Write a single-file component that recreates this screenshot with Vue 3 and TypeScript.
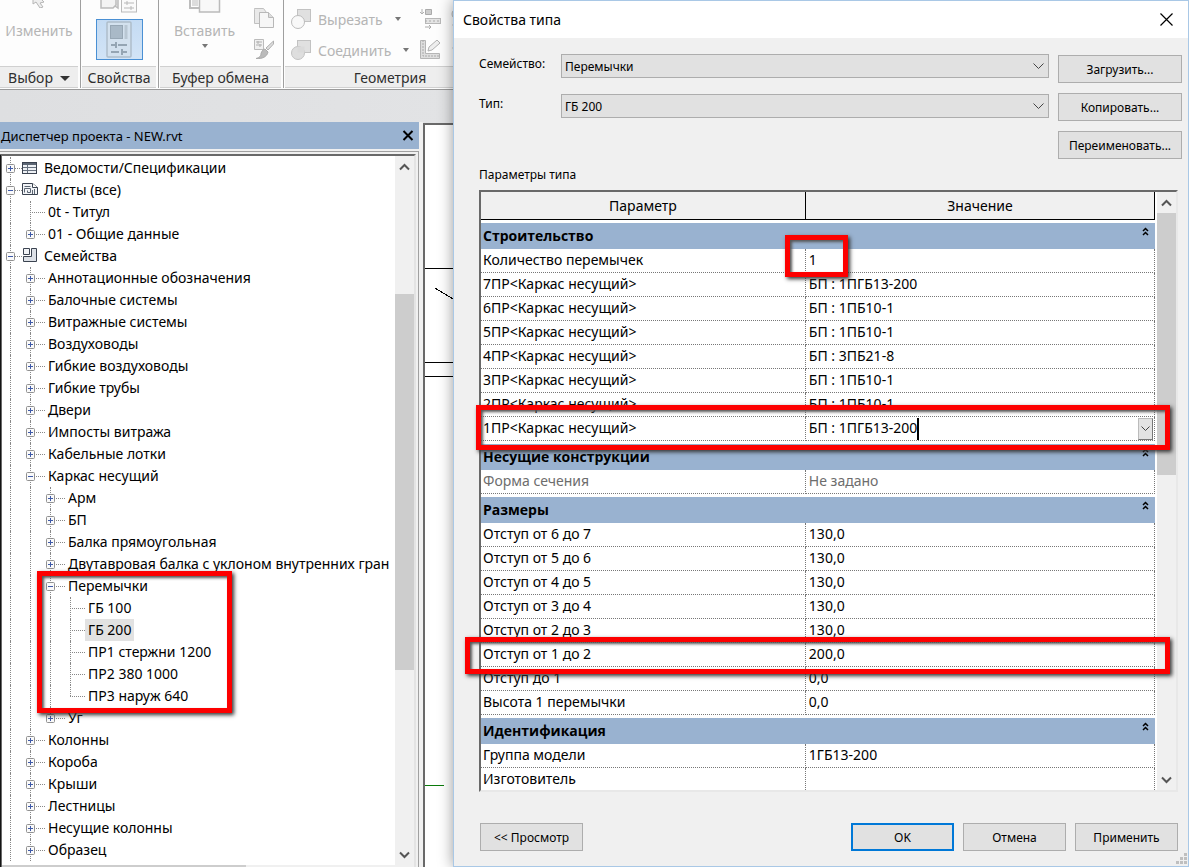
<script setup lang="ts">
import { computed, ref } from 'vue'

type Icon = 'schedule' | 'sheet' | 'family'

interface TreeItem {
  level: number
  label: string
  toggle?: '+' | '-'
  icon?: Icon
  selected?: boolean
  marked?: boolean
}

interface Param {
  name: string
  value: string
  readonly?: boolean
  active?: boolean
}

interface ParamGroup {
  title: string
  rows: Param[]
}

const items: TreeItem[] = [
  { level: 0, label: 'Ведомости/Спецификации', toggle: '+', icon: 'schedule' },
  { level: 0, label: 'Листы (все)', toggle: '-', icon: 'sheet' },
  { level: 1, label: '0t - Титул' },
  { level: 1, label: '01 - Общие данные', toggle: '+' },
  { level: 0, label: 'Семейства', toggle: '-', icon: 'family' },
  { level: 1, label: 'Аннотационные обозначения', toggle: '+' },
  { level: 1, label: 'Балочные системы', toggle: '+' },
  { level: 1, label: 'Витражные системы', toggle: '+' },
  { level: 1, label: 'Воздуховоды', toggle: '+' },
  { level: 1, label: 'Гибкие воздуховоды', toggle: '+' },
  { level: 1, label: 'Гибкие трубы', toggle: '+' },
  { level: 1, label: 'Двери', toggle: '+' },
  { level: 1, label: 'Импосты витража', toggle: '+' },
  { level: 1, label: 'Кабельные лотки', toggle: '+' },
  { level: 1, label: 'Каркас несущий', toggle: '-' },
  { level: 2, label: 'Арм', toggle: '+' },
  { level: 2, label: 'БП', toggle: '+' },
  { level: 2, label: 'Балка прямоугольная', toggle: '+' },
  { level: 2, label: 'Двутавровая балка с уклоном внутренних гран', toggle: '+' },
  { level: 2, label: 'Перемычки', toggle: '-', marked: true },
  { level: 3, label: 'ГБ 100' },
  { level: 3, label: 'ГБ 200', selected: true },
  { level: 3, label: 'ПР1 стержни 1200' },
  { level: 3, label: 'ПР2 380 1000' },
  { level: 3, label: 'ПР3 наруж 640' },
  { level: 2, label: 'Уг', toggle: '+' },
  { level: 1, label: 'Колонны', toggle: '+' },
  { level: 1, label: 'Короба', toggle: '+' },
  { level: 1, label: 'Крыши', toggle: '+' },
  { level: 1, label: 'Лестницы', toggle: '+' },
  { level: 1, label: 'Несущие колонны', toggle: '+' },
  { level: 1, label: 'Образец', toggle: '+' },
]

// The list goes on below the visible part, so the two outer branches never end here.
function branch(index: number, column: number): 'full' | 'half' | 'none' {
  for (let i = index + 1; i < items.length; i++) {
    if (items[i].level === column) return 'full'
    if (items[i].level < column) return items[index].level === column ? 'half' : 'none'
  }
  return column < 2 ? 'full' : 'none'
}

const tree = computed(() =>
  items.map((item, i) => ({
    ...item,
    guides: Array.from({ length: item.level + 1 }, (_, c) => branch(i, c)),
  })),
)

const groups: ParamGroup[] = [
  {
    title: 'Строительство',
    rows: [
      { name: 'Количество перемычек', value: '1' },
      { name: '7ПР<Каркас несущий>', value: 'БП : 1ПГБ13-200' },
      { name: '6ПР<Каркас несущий>', value: 'БП : 1ПБ10-1' },
      { name: '5ПР<Каркас несущий>', value: 'БП : 1ПБ10-1' },
      { name: '4ПР<Каркас несущий>', value: 'БП : 3ПБ21-8' },
      { name: '3ПР<Каркас несущий>', value: 'БП : 1ПБ10-1' },
      { name: '2ПР<Каркас несущий>', value: 'БП : 1ПБ10-1' },
      { name: '1ПР<Каркас несущий>', value: 'БП : 1ПГБ13-200', active: true },
    ],
  },
  {
    title: 'Несущие конструкции',
    rows: [{ name: 'Форма сечения', value: 'Не задано', readonly: true }],
  },
  {
    title: 'Размеры',
    rows: [
      { name: 'Отступ от 6 до 7', value: '130,0' },
      { name: 'Отступ от 5 до 6', value: '130,0' },
      { name: 'Отступ от 4 до 5', value: '130,0' },
      { name: 'Отступ от 3 до 4', value: '130,0' },
      { name: 'Отступ от 2 до 3', value: '130,0' },
      { name: 'Отступ от 1 до 2', value: '200,0' },
      { name: 'Отступ до 1', value: '0,0' },
      { name: 'Высота 1 перемычки', value: '0,0' },
    ],
  },
  {
    title: 'Идентификация',
    rows: [
      { name: 'Группа модели', value: '1ГБ13-200' },
      { name: 'Изготовитель', value: '' },
    ],
  },
]

const activeValue = ref('БП : 1ПГБ13-200')
const family = ref('Перемычки')
const typeName = ref('ГБ 200')
</script>

<template>
  <div class="screen">
    <main class="app">
      <div class="ribbon">
        <section class="panel p-select">
          <div class="panel-body">
            <svg class="cursor" width="16" height="8" viewBox="0 0 16 8"><path d="M2 0v4l3-2 4 6 3-1-3-4 4-1-2-2" fill="#eee" stroke="#b5b5b5" /></svg>
            <span class="tool">Изменить</span>
          </div>
          <h2>Выбор <i class="tri big"></i></h2>
        </section>
        <section class="panel p-props">
          <div class="panel-body">
            <svg width="38" height="13" viewBox="0 0 38 13">
              <path d="M1 0v8h12l3-3V0M18 0v8l-3-2" fill="#f3f3f3" stroke="#bbb" stroke-width="1.5" />
              <rect x="21.500" y="-3" width="15" height="15" fill="#fafafa" stroke="#bbb" />
              <path d="M24 3h10M24 8h10M27 1v4M31 6v4" stroke="#b8b8b8" />
            </svg>
            <button class="props-button" aria-label="Свойства">
              <svg width="26" height="37" viewBox="0 0 26 37">
                <rect x="1" y="1" width="24" height="35" rx="1" fill="#d3e1ee" stroke="#aebdca" stroke-width="1.500" />
                <rect x="4.500" y="4.500" width="12" height="13" fill="#a9b9c7" stroke="#97a7b5" />
                <rect x="18.500" y="4" width="3" height="14" fill="#b9c7d3" />
                <path d="M5 24h4M12 24h9M5 31h8M17 31h4M10 21v6M16 28v6" stroke="#95a5b3" stroke-width="2" />
              </svg>
            </button>
          </div>
          <h2>Свойства</h2>
        </section>
        <section class="panel p-clip">
          <div class="panel-body clip">
            <div class="paste">
              <svg width="32" height="14" viewBox="0 0 32 14">
                <path d="M1 0v8h10" fill="none" stroke="#bdbdbd" stroke-width="2" />
                <path d="M3 0h6v6H3z" fill="#ddd" />
                <rect x="10.500" y="-3" width="20" height="15" fill="#f8f8f8" stroke="#bbb" stroke-width="1.500" />
              </svg>
              <span class="tool">Вставить</span>
              <i class="tri"></i>
            </div>
            <div class="stack">
              <svg width="20" height="20" viewBox="0 0 20 20">
                <path d="M.5 1.500V15.500h5V4.500h7l-3-4H.5z" fill="#e9e9e9" stroke="#c0c0c0" />
                <path d="M5.500 4.500h9l5 5v10h-14z" fill="#f6f6f6" stroke="#b8b8b8" />
                <path d="M14.500 4.500v5h5" fill="#ddd" stroke="#b8b8b8" />
              </svg>
              <svg width="20" height="20" viewBox="0 0 20 20">
                <path d="M.5.500h9v10h-9z" fill="#f0f0f0" stroke="#bbb" />
                <path d="M2 3h6M2 6h6M4 2v3M6 5v3" stroke="#b0b0b0" />
                <path d="M19.500 2 12 9l2 2 5.500-6z" fill="#ddd" stroke="#b0b0b0" />
                <path d="m11 10 3 3c-1 5-6 7-12 6.500 4-1 5-3 5-5 1-3 2-4 4-4.500z" fill="#bbb" stroke="#aaa" />
              </svg>
            </div>
          </div>
          <h2>Буфер обмена</h2>
        </section>
        <section class="panel p-geom">
          <div class="panel-body geom">
            <div class="tool-row">
              <svg width="20" height="20" viewBox="0 0 20 20">
                <rect x="6.500" y=".5" width="13" height="12" fill="#e0e0e0" stroke="#c2c2c2" />
                <circle cx="7" cy="13" r="6.500" fill="#f8f8f8" stroke="#bcbcbc" />
              </svg>
              <span class="tool">Вырезать</span><i class="tri"></i>
              <svg class="side" width="44" height="20" viewBox="0 0 44 20">
                <path d="M2 0v5M0 3l2 2 2-2" fill="none" stroke="#b0b0b0" />
                <path d="M5.500.500h6v5h-6z" fill="#ccc" stroke="#aaa" />
                <rect x="5.500" y="9.500" width="15" height="5" fill="#e4e4e4" stroke="#b8b8b8" />
                <path d="M5 12h15" stroke="#aaa" stroke-dasharray="2 2" />
                <path d="M5 18h6M9 16l2 2-2 2" fill="none" stroke="#aaa" />
                <circle cx="37" cy="5" r="5" fill="#eee" stroke="#b5b5b5" /><circle cx="37" cy="16" r="4" fill="#eee" stroke="#b5b5b5" />
              </svg>
            </div>
            <div class="tool-row">
              <svg width="20" height="20" viewBox="0 0 20 20">
                <rect x="6.500" y=".5" width="13" height="12" fill="#e0e0e0" stroke="#c2c2c2" />
                <circle cx="7" cy="13" r="6.500" fill="#dedede" stroke="#c2c2c2" />
                <path d="M6.500 12.500V6.500h7v6z" fill="#dadada" />
              </svg>
              <span class="tool">Соединить</span><i class="tri"></i>
              <svg class="side" width="44" height="20" viewBox="0 0 44 20">
                <path d="M.5.500h5v13h14v5H.5z" fill="#dedede" stroke="#b5b5b5" />
                <path d="M3 0v16h16" fill="none" stroke="#aaa" stroke-dasharray="2 1" />
                <path d="m8 11 1-4 8-7 3 3-8 7z" fill="#eee" stroke="#b0b0b0" />
                <circle cx="37" cy="8" r="4" fill="#ddd" stroke="#b5b5b5" />
              </svg>
            </div>
          </div>
          <h2>Геометрия</h2>
        </section>
      </div>

      <div class="workspace">
        <aside class="browser">
          <header class="browser-title">
            <h1>Диспетчер проекта - NEW.rvt</h1>
            <button class="plain" aria-label="Закрыть диспетчер">
              <svg width="12" height="11" viewBox="0 0 12 11"><path d="m1.500 1 9 9m0-9-9 9" stroke="#000" stroke-width="2" /></svg>
            </button>
          </header>
          <div class="browser-frame">
            <div class="tree-box">
              <div class="tree-view">
                <ul class="tree">
                  <li v-for="(item, i) in tree" :key="i" class="node">
                    <span
                      v-for="(g, c) in item.guides"
                      :key="c"
                      class="cell"
                      :class="[g, { own: c === item.level, root: c === 0 && item.level === 0 }]"
                    >
                      <button v-if="c === item.level && item.toggle" class="toggle" :aria-label="item.label">
                        <svg width="9" height="9" viewBox="0 0 9 9">
                          <rect x=".5" y=".5" width="8" height="8" rx="1" fill="#fafafa" stroke="#919191" />
                          <path :d="item.toggle === '+' ? 'M2 4.500h5M4.500 2v5' : 'M2 4.500h5'" stroke="#3f5aa8" />
                        </svg>
                      </button>
                    </span>
                    <svg v-if="item.icon" class="node-icon" width="16" height="16" viewBox="0 0 16 16">
                      <template v-if="item.icon === 'schedule'">
                        <rect x=".5" y="2.500" width="14" height="11" fill="#eef1f5" stroke="#3b4350" />
                        <path d="M1 4h13" stroke="#5b6573" stroke-width="2" />
                        <path d="M1 7.500h13M1 10.500h13M5.500 5v8" stroke="#66707e" />
                      </template>
                      <template v-else-if="item.icon === 'sheet'">
                        <path d="M.5 1.500h10l5 4v7H.5z" fill="#f2f4f7" stroke="#3b4350" />
                        <path d="M10.500 1.500v4h5" fill="#fff" stroke="#3b4350" />
                        <path d="M2.500 10.500v-4h6v4H5.500v-2M12.500 7v5M10.500 8v4M2.500 4.500h6" fill="none" stroke="#5b6573" />
                      </template>
                      <template v-else>
                        <path d="M1.500.500h6v6h-6z" fill="#f2f4f7" stroke="#3b4350" />
                        <path d="M9.500.500h5v13h-13v-5h8z" fill="#dde1e7" stroke="#3b4350" />
                      </template>
                    </svg>
                    <span class="label" :class="{ selected: item.selected }">{{ item.label }}</span>
                    <span v-if="item.marked" class="mark mark-tree"></span>
                  </li>
                </ul>
                <div class="hscroll"><i></i></div>
              </div>
              <div class="vscroll tree-scroll">
                <button class="plain arrow" aria-label="Вверх"><svg width="11" height="8" viewBox="0 0 11 8"><path d="m1 6.500 4.500-4.500L10 6.500" fill="none" stroke="#555" stroke-width="2" /></svg></button>
                <div class="track"><i class="before"></i><i class="thumb"></i><i class="after"></i></div>
                <button class="plain arrow" aria-label="Вниз"><svg width="11" height="8" viewBox="0 0 11 8"><path d="m1 1.500 4.500 4.500L10 1.500" fill="none" stroke="#555" stroke-width="2" /></svg></button>
              </div>
            </div>
          </div>
        </aside>
        <div class="canvas">
          <svg width="28" height="742" viewBox="0 0 28 742" shape-rendering="crispEdges">
            <path d="M0 143.500h28M0 237.500h28M0 251.500h28M10 163l18 11" stroke="#000" fill="none" />
            <path d="M0 660.500h19" stroke="#0a7a0a" />
          </svg>
        </div>
      </div>
    </main>

    <div class="dialog" role="dialog" aria-labelledby="dialog-title">
      <header class="dialog-title">
        <h1 id="dialog-title">Свойства типа</h1>
        <button class="plain" aria-label="Закрыть">
          <svg width="13" height="13" viewBox="0 0 13 13"><path d="m.5.500 12 12m0-12-12 12" stroke="#000" stroke-width="1.200" /></svg>
        </button>
      </header>

      <div class="dialog-body">
        <div class="top">
          <div class="fields">
            <label for="family">Семейство:</label>
            <div class="combo">
              <select id="family" v-model="family"><option>Перемычки</option></select>
              <svg width="11" height="7" viewBox="0 0 11 7"><path d="m.5.500 5 5 5-5" fill="none" stroke="#444" /></svg>
            </div>
            <label for="type">Тип:</label>
            <div class="combo">
              <select id="type" v-model="typeName"><option>ГБ 200</option></select>
              <svg width="11" height="7" viewBox="0 0 11 7"><path d="m.5.500 5 5 5-5" fill="none" stroke="#444" /></svg>
            </div>
          </div>
          <div class="actions">
            <button class="btn">Загрузить...</button>
            <button class="btn">Копировать...</button>
            <button class="btn">Переименовать...</button>
          </div>
        </div>

        <p class="caption">Параметры типа</p>

        <div class="grid-wrap">
          <div class="grid-frame">
            <div class="grid-view">
              <table>
                <colgroup><col class="col-name" /><col /></colgroup>
                <thead>
                  <tr><th scope="col">Параметр</th><th scope="col">Значение</th></tr>
                </thead>
                <tbody v-for="group in groups" :key="group.title">
                  <tr>
                    <th class="group" colspan="2" scope="rowgroup">
                      <div>
                        {{ group.title }}
                        <svg width="7" height="9" viewBox="0 0 7 9"><path d="m1 4 2.500-2.500L6 4M1 8l2.500-2.500L6 8" fill="none" stroke="#000" stroke-width="1.500" /></svg>
                      </div>
                    </th>
                  </tr>
                  <tr v-for="row in group.rows" :key="row.name" :class="{ readonly: row.readonly }">
                    <td>{{ row.name }}</td>
                    <td v-if="row.active" class="editing">
                      <div class="editor">
                        <input v-model="activeValue" type="text" size="12" :aria-label="row.name" />
                        <button class="drop" aria-label="Выбрать значение">
                          <svg width="9" height="6" viewBox="0 0 9 6"><path d="m.5.500 4 4 4-4" fill="none" stroke="#444" /></svg>
                        </button>
                      </div>
                    </td>
                    <td v-else>{{ row.value }}</td>
                  </tr>
                </tbody>
              </table>
            </div>
            <div class="vscroll grid-scroll">
              <button class="plain arrow" aria-label="Вверх"><svg width="11" height="8" viewBox="0 0 11 8"><path d="m1 6.500 4.500-4.500L10 6.500" fill="none" stroke="#555" stroke-width="2" /></svg></button>
              <div class="track"><i class="thumb"></i><i class="after"></i></div>
              <button class="plain arrow" aria-label="Вниз"><svg width="11" height="8" viewBox="0 0 11 8"><path d="m1 1.500 4.500 4.500L10 1.500" fill="none" stroke="#555" stroke-width="2" /></svg></button>
            </div>
          </div>
          <span class="mark mark-count"></span>
          <span class="mark mark-frame"></span>
          <span class="mark mark-offset"></span>
        </div>

        <footer class="buttons">
          <button class="btn">&lt;&lt; Просмотр</button>
          <span class="spacer"></span>
          <button class="btn default">OK</button>
          <button class="btn">Отмена</button>
          <button class="btn">Применить</button>
        </footer>
      </div>
      <svg class="grip" width="11" height="11" viewBox="0 0 11 11">
        <path d="M8 0h3v3H8zM4 4h3v3H4zM8 4h3v3H8zM0 8h3v3H0zM4 8h3v3H4zM8 8h3v3H8z" fill="#bfbfbf" />
      </svg>
    </div>
  </div>
</template>

<style>
body {
  margin: 0;
}
</style>

<style scoped>
* {
  box-sizing: border-box;
}
.screen {
  display: grid;
  grid-template-columns: minmax(0, 453fr) minmax(0, 736fr);
  height: 100vh;
  overflow: hidden;
  background: #f0f0f0;
  color: #000;
  font: 14px/20px "Noto Sans", "Open Sans", sans-serif;
}
h1,
h2,
p,
ul {
  margin: 0;
  padding: 0;
  font-size: inherit;
  font-weight: normal;
}
button,
input,
select {
  font: inherit;
  color: inherit;
  margin: 0;
}
svg {
  display: block;
  flex: none;
}
.plain {
  display: flex;
  align-items: center;
  justify-content: center;
  padding: 0;
  border: 0;
  background: none;
}
.app {
  display: flex;
  flex-direction: column;
  min-width: 0;
  min-height: 0;
  overflow: hidden;
  background: linear-gradient(90deg, #dedfe1, #e2e3e5);
}

/* Ribbon */
.ribbon {
  display: flex;
  flex: none;
  height: 90px;
  padding-bottom: 1px;
  border-bottom: 1px solid #9a9a9a;
  background: #fdfdfd;
}
.panel {
  display: flex;
  flex: none;
  flex-direction: column;
  border-right: 1px solid #9f9f9f;
  padding: 0 2px 0 1px;
}
.p-select {
  width: 81px;
  padding-left: 0;
}
.p-props {
  width: 78px;
}
.p-clip {
  width: 125px;
}
.p-geom {
  width: 214px;
}
.panel-body {
  display: flex;
  flex-direction: column;
  align-items: center;
  height: 66px;
}
.p-props .panel-body {
  gap: 6px;
}
.panel h2 {
  display: flex;
  align-items: center;
  justify-content: center;
  gap: 7px;
  height: 22px;
  padding-top: 2px;
  border: 1px solid #d0d0d0;
  border-width: 1px 0;
  background: #eee;
  color: #2e2e2e;
}
.tool {
  color: #b5b5b5;
}
.cursor + .tool {
  margin-top: 13px;
}
.tri {
  border: 3px solid transparent;
  border-top: 4px solid #777;
  border-bottom: 0;
}
.tri.big {
  border-width: 5px 5px 0;
  border-top-color: #333;
}
.props-button {
  display: flex;
  align-items: center;
  justify-content: center;
  width: 47px;
  height: 41px;
  padding: 0;
  border: 1px solid #4a90d4;
  background: linear-gradient(#c4dbf3, #d2e4f6);
}
.clip {
  flex-direction: row;
  align-items: flex-start;
  justify-content: space-between;
  padding: 0 7px 0 14px;
}
.paste {
  display: flex;
  flex-direction: column;
  align-items: center;
}
.paste .tool {
  margin-top: 7px;
}
.paste .tri {
  margin-top: 3px;
}
.stack {
  display: flex;
  flex-direction: column;
  gap: 11px;
  padding-top: 8px;
}
.geom {
  align-items: stretch;
  gap: 11px;
  padding: 8px 0 0 6px;
}
.tool-row {
  display: grid;
  grid-template-columns: 20px 95px 44px;
  grid-template-areas: "icon text side";
  column-gap: 7px;
  align-items: center;
  height: 20px;
}
.tool-row .tool,
.tool-row .tri {
  grid-area: text;
}
.tool-row .tool {
  padding-top: 2px;
}
.tool-row .tri {
  margin-left: 77px;
  justify-self: start;
}
.tool-row + .tool-row .tri {
  margin-left: 85px;
}
.side {
  grid-area: side;
}

/* Project browser */
.workspace {
  display: flex;
  flex: 1;
  min-height: 0;
  padding-top: 32px;
}
.browser {
  display: flex;
  flex: 1;
  flex-direction: column;
  min-width: 0;
  padding-right: 4px;
  background: #f0f0f0;
}
.browser-title {
  display: flex;
  flex: none;
  align-items: center;
  justify-content: space-between;
  height: 27px;
  padding: 0 5px 0 1px;
  background: #99b2d0;
  font-size: 13px;
}
.browser-frame {
  display: flex;
  flex: 1;
  min-height: 0;
  margin-top: 2px;
  padding: 2px 2px 0 0;
  border: 1px solid #a0a0a0;
  border-width: 1px 1px 0 0;
}
.tree-box {
  display: flex;
  flex: 1;
  min-width: 0;
  border: 2px solid #696969;
  border-right: 2px solid #e3e3e3;
  border-bottom: 0;
  border-left-style: groove;
  background: #fff;
}
.tree-view {
  display: flex;
  flex: 1;
  flex-direction: column;
  min-width: 0;
  overflow: hidden;
}
.tree {
  flex: 1;
  min-height: 0;
  padding: 1px 0 0 4px;
  list-style: none;
  overflow: hidden;
}
.node {
  position: relative;
  display: flex;
  align-items: center;
  height: 22px;
  white-space: nowrap;
}
.cell {
  position: relative;
  display: flex;
  flex: none;
  align-items: center;
  align-self: stretch;
  width: 20px;
}
.cell.own {
  width: 19px;
}
.cell.root {
  width: 16px;
}
.cell::before {
  content: "";
  position: absolute;
  top: 0;
  bottom: 0;
  left: 4px;
  border-left: 1px dotted #888;
}
.cell.half::before {
  bottom: 11px;
}
.cell.none::before {
  bottom: 100%;
}
.cell.own::after {
  content: "";
  position: absolute;
  top: 11px;
  left: 4px;
  right: 0;
  border-top: 1px dotted #888;
}
.toggle {
  position: relative;
  z-index: 1;
  padding: 0;
  border: 0;
  background: none;
}
.node-icon {
  margin-right: 3px;
}
.label {
  padding: 0 3px;
  line-height: 22px;
}
.label.selected {
  background: #e2e2e2;
}
.hscroll {
  flex: none;
  height: 2px;
  background: #f0f0f0;
}
.hscroll i {
  display: block;
  width: 62%;
  height: 2px;
  background: #cdcdcd;
}
.vscroll {
  display: flex;
  flex: none;
  flex-direction: column;
  width: 19px;
  background: #f0f0f0;
}
.arrow {
  flex: none;
  height: 21px;
}
.track {
  display: flex;
  flex: 1;
  flex-direction: column;
  min-height: 0;
}
.thumb {
  flex: 375;
  background: #cdcdcd;
}
.tree-scroll {
  padding-bottom: 2px;
}
.tree-scroll .before {
  flex: 117;
}
.tree-scroll .after {
  flex: 174;
}
.canvas {
  flex: none;
  width: 30px;
  margin-top: 1px;
  border: 2px solid #696969;
  border-width: 2px 0 0 2px;
  background: #fff;
  overflow: hidden;
}

/* Highlight frames */
.mark {
  position: absolute;
  z-index: 2;
  border: 5px solid #fd0000;
  box-shadow: 2px 2px 4px #333, inset 2px 2px 3px #555;
  pointer-events: none;
}
.mark-tree {
  top: -4px;
  left: 31px;
  width: 195px;
  height: 142px;
}
.mark-count {
  top: 45px;
  left: calc(48% - 30px);
  width: 63px;
  height: 42px;
}
.mark-frame {
  top: 215px;
  left: -3px;
  right: 8px;
  height: 45px;
}
.mark-offset {
  top: 447px;
  left: -14px;
  right: 8px;
  height: 37px;
}

/* Dialog */
.dialog {
  position: relative;
  z-index: 3;
  display: flex;
  flex-direction: column;
  min-height: 0;
  border: 1px solid #a9c8e6;
  background: #f0f0f0;
  box-shadow: 0 0 14px rgba(0, 0, 0, 0.4);
}
.dialog-title {
  display: flex;
  flex: none;
  align-items: center;
  justify-content: space-between;
  height: 37px;
  padding: 0 15px 0 9px;
  background: #fff;
}
.dialog-body {
  display: flex;
  flex: 1;
  flex-direction: column;
  min-height: 0;
  padding: 16px 10px 15px 25px;
  font-size: 12px;
  line-height: 18px;
}
.top {
  display: flex;
  gap: 9px;
  margin-right: -4px;
}
.fields {
  display: grid;
  flex: 1;
  grid-template-columns: 82px minmax(0, 1fr);
  grid-auto-rows: 24px;
  row-gap: 16px;
}
.fields label {
  padding-top: 1px;
}
.combo {
  position: relative;
}
.combo select {
  width: 100%;
  height: 24px;
  padding: 2px 24px 0 3px;
  border: 1px solid #adadad;
  border-radius: 0;
  background: #e1e1e1;
  appearance: none;
}
.combo svg {
  position: absolute;
  top: 9px;
  right: 5px;
  pointer-events: none;
}
.actions {
  display: flex;
  flex: none;
  flex-direction: column;
  gap: 10px;
  width: 124px;
  padding-top: 1px;
}
.btn {
  height: 28px;
  padding: 2px 0 0;
  border: 1px solid #adadad;
  background: #e1e1e1;
  white-space: nowrap;
}
.caption {
  margin: 7px 0 6px;
}
.grid-wrap {
  position: relative;
  display: flex;
  flex: 1;
  min-height: 0;
}
.grid-frame {
  display: flex;
  flex: 1;
  min-width: 0;
  border: 2px solid #696969;
  border-right-color: #e8e8e8;
  border-bottom-color: #e8e8e8;
  background: #fff;
  overflow: hidden;
}
.grid-view {
  flex: 1;
  min-width: 0;
  margin-right: 2px;
  overflow: hidden;
}
table {
  width: 100%;
  table-layout: fixed;
  border-collapse: separate;
  border-spacing: 0;
  font-size: 14px;
  line-height: 20px;
}
.col-name {
  width: 48.2%;
}
th {
  padding: 0;
  font-weight: normal;
}
thead th {
  height: 28px;
  border: 1px solid #000;
  border-width: 0 1px 1px 0;
  background: #f0f0f0;
}
th.group {
  height: 29px;
  border-top: 3px solid #fff;
  background: #99b2d0;
  font-family: "Open Sans", "Noto Sans", sans-serif;
  font-weight: bold;
  text-align: left;
}
.group div {
  display: flex;
  justify-content: space-between;
  height: 20px;
  padding: 0 6px 0 2px;
}
.group svg {
  margin-top: 1px;
}
td {
  height: 24px;
  padding: 0 2px 2px;
  border: 1px dotted #777;
  border-width: 0 1px 1px 0;
  line-height: 20px;
  white-space: nowrap;
}
td + td {
  padding-left: 3px;
}
td.editing {
  padding: 0 1px 0 3px;
}
.readonly td {
  color: #6d6d6d;
}
.editor {
  display: flex;
  align-items: center;
  justify-content: space-between;
  height: 22px;
}
.editor input {
  field-sizing: content;
  height: 22px;
  padding: 0 0 2px;
  border: 0;
  border-right: 2px solid #000;
  background: none;
  outline: none;
}
.drop {
  display: flex;
  align-items: center;
  justify-content: center;
  width: 15px;
  height: 22px;
  padding: 0;
  border: 1px solid #777;
  border-color: #bbb #777 #777 #bbb;
  background: #e3e3e3;
}
.grid-scroll .thumb {
  flex: 262;
}
.grid-scroll .after {
  flex: 293;
}
.buttons {
  display: flex;
  flex: none;
  gap: 9px;
  margin-top: 31px;
  padding-left: 1px;
}
.buttons .btn {
  width: 103px;
}
.spacer {
  flex: 1;
}
.buttons .default {
  border: 2px solid #0078d7;
}
.grip {
  position: absolute;
  right: 1px;
  bottom: 2px;
}
</style>
